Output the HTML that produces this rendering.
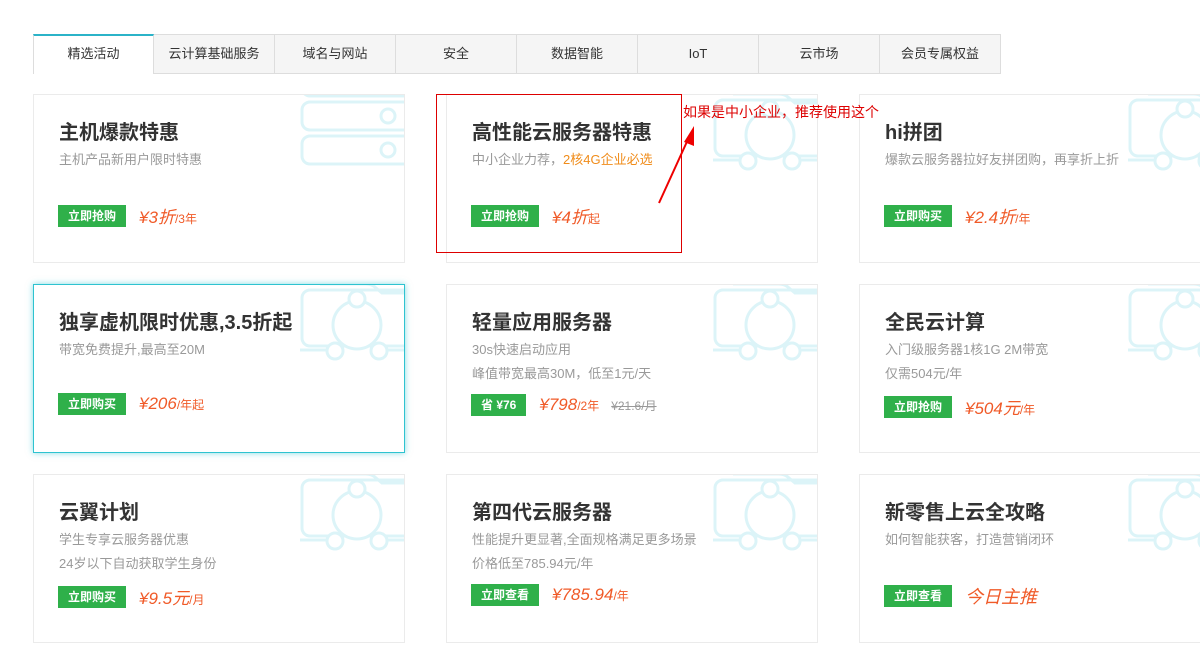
<!DOCTYPE html>
<html><head><meta charset="utf-8"><style>
*{margin:0;padding:0;box-sizing:border-box}
body{width:1200px;height:662px;background:#fff;font-family:"Liberation Sans","Noto Sans CJK SC",sans-serif;position:relative;overflow:hidden}
.tabs{position:absolute;left:33px;top:34px;height:40px;display:flex}
.tab{width:121px;height:40px;border:1px solid #ddd;border-left:none;background:#f5f5f5;font-size:13px;color:#333;text-align:center;line-height:38px}
.tab:first-child{border-left:1px solid #ddd;background:#fff;border-top:2px solid #2bb3c8;line-height:36px;border-bottom:none}
.card{position:absolute;width:372px;height:169px;border:1px solid #ebebeb;background:#fff;overflow:hidden}
.card.hl{border:1px solid #2ec3d0;box-shadow:0 0 6px rgba(46,195,208,.6)}
.deco{position:absolute;right:-1px;top:-1px}
.t{position:absolute;left:25px;top:21px;font-size:20px;font-weight:bold;color:#333;white-space:nowrap}
.s{position:absolute;left:25px;top:53px;font-size:13px;color:#999;line-height:24px;white-space:nowrap}
.s em{font-style:normal;color:#f08c1a}
.b{position:absolute;left:24px;top:108px;display:flex;align-items:center;white-space:nowrap}
.btn{background:#2fb04a;color:#fff;font-size:12px;font-weight:bold;height:22px;line-height:22px;padding:0 10px}
.p{color:#f05a28;font-style:italic;font-size:17px;margin-left:13px}
.p small{font-style:normal;font-size:12px}
.o{color:#999;text-decoration:line-through;font-size:12px;margin-left:12px}
</style></head><body>
<div class="tabs"><div class="tab">精选活动</div><div class="tab">云计算基础服务</div><div class="tab">域名与网站</div><div class="tab">安全</div><div class="tab">数据智能</div><div class="tab">IoT</div><div class="tab">云市场</div><div class="tab">会员专属权益</div></div>

<svg width="0" height="0" style="position:absolute"><defs><g id="d" fill="none" stroke="#dcf4f8" stroke-width="3"><rect x="2" y="6" width="130" height="56" rx="8"/><path d="M20 0 H66 Q72 0 76 4 L82 9 H120"/><circle cx="57" cy="41" r="24" fill="#fff"/><circle cx="57" cy="15" r="8" fill="#fff"/><circle cx="35" cy="67" r="8" fill="#fff"/><circle cx="79" cy="67" r="8" fill="#fff"/><path d="M0 66 H27 M87 66 H110"/></g></defs></svg>

<div class="card" style="left:33px;top:94px"><svg class="deco" width="105" height="90"><g fill="none" stroke="#dcf4f8" stroke-width="3"><rect x="2" y="-20" width="120" height="22" rx="8"/><rect x="2" y="8" width="120" height="28" rx="8"/><circle cx="88" cy="22" r="7"/><rect x="2" y="42" width="120" height="28" rx="8"/><circle cx="88" cy="56" r="7"/></g></svg>
<div class="t">主机爆款特惠</div><div class="s">主机产品新用户限时特惠</div><div class="b"><span class="btn">立即抢购</span><span class="p">¥3折<small>/3年</small></span></div></div>
<div class="card" style="left:446px;top:94px"><svg class="deco" width="105" height="90" viewBox="0 0 105 90"><use href="#d"/></svg>
<div class="t">高性能云服务器特惠</div><div class="s">中小企业力荐，<em>2核4G企业必选</em></div><div class="b"><span class="btn">立即抢购</span><span class="p">¥4折<small>起</small></span></div></div>
<div class="card" style="left:859px;top:94px"><svg class="deco" style="right:auto;left:268px" width="105" height="90" viewBox="0 0 105 90"><use href="#d"/></svg>
<div class="t">hi拼团</div><div class="s">爆款云服务器拉好友拼团购，再享折上折</div><div class="b"><span class="btn">立即购买</span><span class="p">¥2.4折<small>/年</small></span></div></div>

<div class="card hl" style="left:33px;top:284px"><svg class="deco" width="105" height="90" viewBox="0 0 105 90"><use href="#d"/></svg>
<div class="t">独享虚机限时优惠,3.5折起</div><div class="s">带宽免费提升,最高至20M</div><div class="b"><span class="btn">立即购买</span><span class="p">¥206<small>/年起</small></span></div></div>
<div class="card" style="left:446px;top:284px"><svg class="deco" width="105" height="90" viewBox="0 0 105 90"><use href="#d"/></svg>
<div class="t">轻量应用服务器</div><div class="s">30s快速启动应用<br>峰值带宽最高30M，低至1元/天</div><div class="b" style="top:109px"><span class="btn">省 ¥76</span><span class="p">¥798<small>/2年</small></span><span class="o">¥21.6/月</span></div></div>
<div class="card" style="left:859px;top:284px"><svg class="deco" style="right:auto;left:268px" width="105" height="90" viewBox="0 0 105 90"><use href="#d"/></svg>
<div class="t">全民云计算</div><div class="s">入门级服务器1核1G 2M带宽<br>仅需504元/年</div><div class="b" style="top:109px"><span class="btn">立即抢购</span><span class="p">¥504元<small>/年</small></span></div></div>

<div class="card" style="left:33px;top:474px"><svg class="deco" width="105" height="90" viewBox="0 0 105 90"><use href="#d"/></svg>
<div class="t">云翼计划</div><div class="s">学生专享云服务器优惠<br>24岁以下自动获取学生身份</div><div class="b" style="top:109px"><span class="btn">立即购买</span><span class="p">¥9.5元<small>/月</small></span></div></div>
<div class="card" style="left:446px;top:474px"><svg class="deco" width="105" height="90" viewBox="0 0 105 90"><use href="#d"/></svg>
<div class="t">第四代云服务器</div><div class="s">性能提升更显著,全面规格满足更多场景<br>价格低至785.94元/年</div><div class="b" style="top:109px"><span class="btn">立即查看</span><span class="p">¥785.94<small>/年</small></span></div></div>
<div class="card" style="left:859px;top:474px"><svg class="deco" style="right:auto;left:268px" width="105" height="90" viewBox="0 0 105 90"><use href="#d"/></svg>
<div class="t">新零售上云全攻略</div><div class="s">如何智能获客，打造营销闭环</div><div class="b"><span class="btn">立即查看</span><span class="p" style="font-size:18px">今日主推</span></div></div>

<div style="position:absolute;left:436px;top:94px;width:246px;height:159px;border:1px solid #d00"></div>
<div style="position:absolute;left:683px;top:102px;font-size:14px;color:#d00;white-space:nowrap">如果是中小企业，推荐使用这个</div>
<svg style="position:absolute;left:650px;top:120px" width="50" height="90"><line x1="9" y1="83" x2="40" y2="15" stroke="#e00" stroke-width="2"/><polygon points="44,6 34,22 44,26" fill="#e00"/></svg>
</body></html>
